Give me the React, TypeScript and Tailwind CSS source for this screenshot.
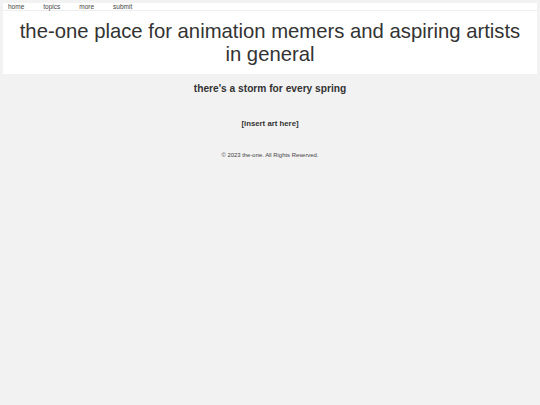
export default function App() {
  return (
    <div className="min-h-screen bg-[#f2f2f2] p-[3px] text-[#333] font-['Liberation_Sans',Arial,sans-serif]">
      <header className="bg-white">
        <nav className="flex gap-[19px] h-[8px] pl-[5px] border-b border-[#eeeeee] text-[6.5px] leading-[7px] text-[#444]">
          <a href="#">home</a>
          <a href="#">topics</a>
          <a href="#">more</a>
          <a href="#">submit</a>
        </nav>
        <h1 className="px-[16px] pt-[9px] pb-[8px] text-center text-[20.3px] leading-[23px]">
          the-one place for animation memers and aspiring artists in general
        </h1>
      </header>
      <main className="text-center">
        <h2 className="mt-[9px] text-[10.2px] leading-[12px] font-bold">there's a storm for every spring</h2>
        <p className="mt-[24px] text-[7.8px] leading-[9px] font-bold">[insert art here]</p>
      </main>
      <footer className="mt-[24px] text-center text-[5.9px] leading-[7px] text-[#444]">
        © 2023 the-one. All Rights Reserved.
      </footer>
    </div>
  );
}
